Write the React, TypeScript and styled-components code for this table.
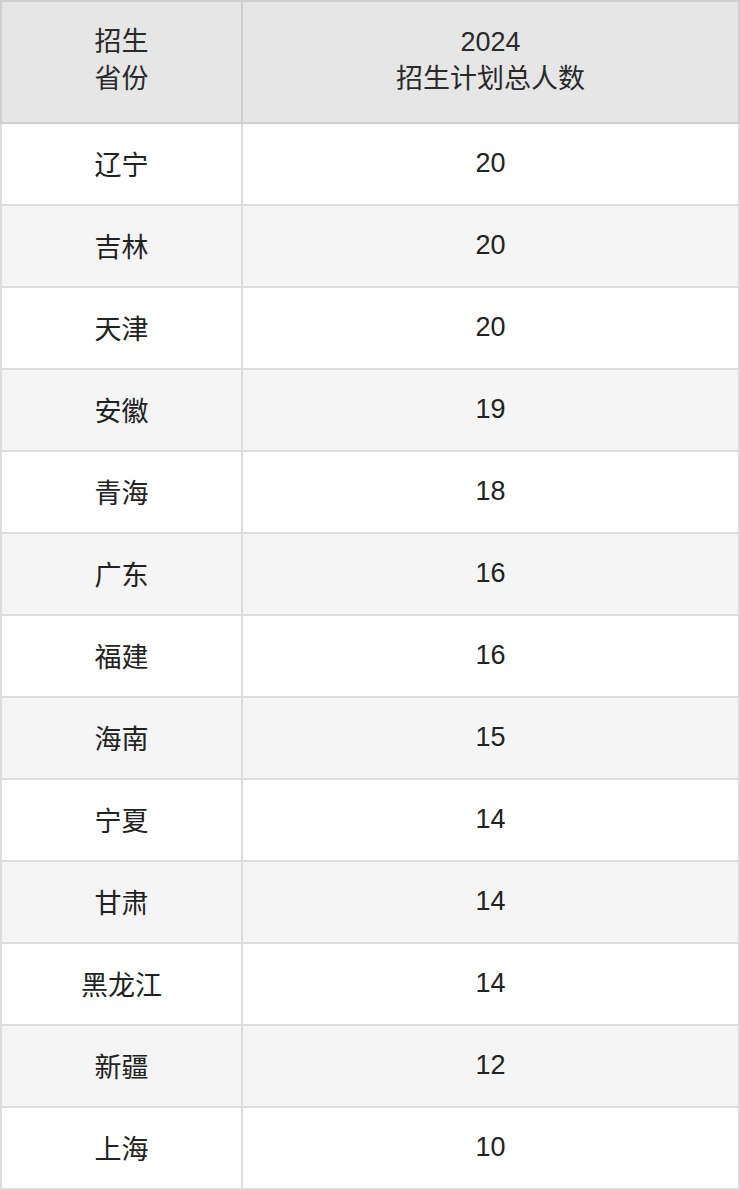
import React from 'react';
import styled, { createGlobalStyle } from 'styled-components';

const GlobalStyle = createGlobalStyle`
  html, body {
    margin: 0;
    padding: 0;
    background: #fff;
  }
`;

const rows: { province: string; total: number }[] = [
  { province: '辽宁', total: 20 },
  { province: '吉林', total: 20 },
  { province: '天津', total: 20 },
  { province: '安徽', total: 19 },
  { province: '青海', total: 18 },
  { province: '广东', total: 16 },
  { province: '福建', total: 16 },
  { province: '海南', total: 15 },
  { province: '宁夏', total: 14 },
  { province: '甘肃', total: 14 },
  { province: '黑龙江', total: 14 },
  { province: '新疆', total: 12 },
  { province: '上海', total: 10 },
];

const App: React.FC = () => {
  return (
    <>
      <GlobalStyle />
      <Table>
        <colgroup>
          <col style={{ width: 241 }} />
          <col />
        </colgroup>
        <thead>
          <tr>
            <HeadCell>
              招生
              <br />
              省份
            </HeadCell>
            <HeadCell>
              2024
              <br />
              招生计划总人数
            </HeadCell>
          </tr>
        </thead>
        <tbody>
          {rows.map((row, index) => (
            <Row key={row.province} striped={index % 2 === 1}>
              <Cell>{row.province}</Cell>
              <Cell>{row.total}</Cell>
            </Row>
          ))}
        </tbody>
      </Table>
    </>
  );
};

export default App;

const Table = styled.table`
  width: 740px;
  border-collapse: collapse;
  table-layout: fixed;
  font-family: 'Liberation Sans', Arial, 'Noto Sans CJK SC', sans-serif;
  font-size: 27px;
  color: #222;
`;

const HeadCell = styled.th`
  height: 122px;
  padding: 0 0 3px;
  box-sizing: border-box;
  background: #e6e6e6;
  border: 2px solid #cfcfcf;
  font-weight: normal;
  line-height: 37px;
  color: #2a2a2a;
  text-align: center;
  vertical-align: middle;
`;

const Row = styled.tr<{ striped: boolean }>`
  background: ${({ striped }) => (striped ? '#f5f5f5' : '#fff')};
`;

const Cell = styled.td`
  height: 82px;
  padding: 0 0 2px;
  box-sizing: border-box;
  border: 2px solid #dcdcdc;
  text-align: center;
  vertical-align: middle;
`;
